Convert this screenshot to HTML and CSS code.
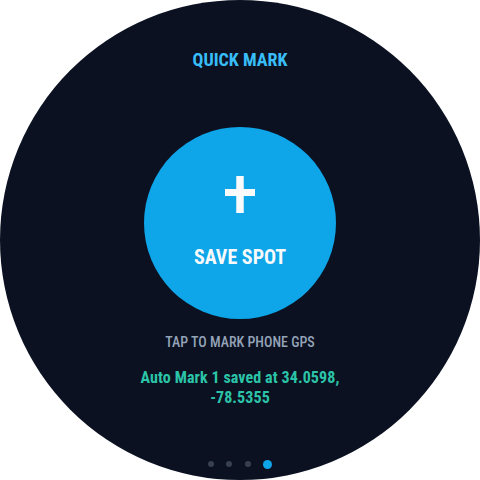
FILE: index.html
```html
<!DOCTYPE html>
<html>
<head>
<meta charset="utf-8">
<link rel="stylesheet" href="styles.css">
</head>
<body>
<div class="watch">
  <div class="title">QUICK MARK</div>
  <div class="save-btn">
    <svg class="plus" viewBox="0 0 30 37" width="30" height="37">
      <rect x="11.25" y="0" width="7.5" height="37" fill="#f8fafc"/>
      <rect x="0" y="13" width="30" height="7" fill="#f8fafc"/>
    </svg>
    <div class="save-label">SAVE SPOT</div>
  </div>
  <div class="hint">TAP TO MARK PHONE GPS</div>
  <div class="status">Auto Mark 1 saved at 34.0598, -78.5355</div>
  <div class="dots">
    <span class="dot"></span>
    <span class="dot"></span>
    <span class="dot"></span>
    <span class="dot active"></span>
  </div>
</div>
</body>
</html>
```
FILE: styles.css
```css
html, body {
  margin: 0;
  padding: 0;
  background: #ffffff;
}
.watch {
  width: 480px;
  height: 480px;
  border-radius: 50%;
  background: #0b1120;
  overflow: hidden;
  display: flex;
  flex-direction: column;
  align-items: center;
  font-family: "Roboto Condensed", "Liberation Sans Narrow", Roboto, sans-serif;
  text-align: center;
}
.title {
  margin-top: 49px;
  font-size: 18px;
  line-height: 22px;
  font-weight: 700;
  color: #38bdf8;
}
.save-btn {
  margin-top: 56px;
  width: 192px;
  height: 192px;
  border-radius: 50%;
  background: #0ea5e9;
  display: flex;
  flex-direction: column;
  align-items: center;
  box-sizing: border-box;
  padding-top: 49px;
}
.plus {
  display: block;
}
.save-label {
  margin-top: 32px;
  font-size: 20px;
  line-height: 24px;
  font-weight: 700;
  color: #f8fafc;
}
.hint {
  margin-top: 15px;
  font-size: 14px;
  line-height: 16px;
  font-weight: 500;
  color: #94a3b8;
}
.status {
  margin-top: 18px;
  max-width: 230px;
  font-size: 16px;
  line-height: 20px;
  font-weight: 700;
  letter-spacing: 0.1px;
  color: #2bc4a9;
}
.dots {
  margin-top: 52px;
  display: flex;
  align-items: center;
  gap: 12.5px;
  height: 8px;
}
.dot {
  width: 6px;
  height: 6px;
  border-radius: 50%;
  background: #374151;
}
.dot.active {
  width: 9px;
  height: 9px;
  background: #0ea5e9;
}
```
